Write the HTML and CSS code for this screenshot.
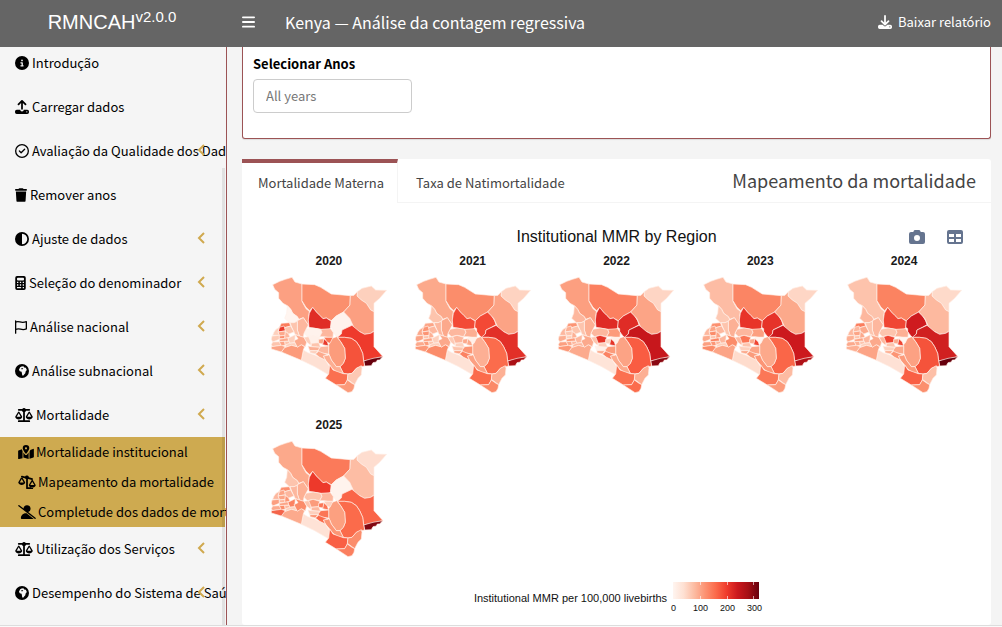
FILE: index.html
```html
<!DOCTYPE html>
<html lang="pt">
<head>
<meta charset="utf-8">
<meta name="viewport" content="width=device-width, initial-scale=1">
<title>RMNCAH – Mapeamento da mortalidade</title>
<link rel="stylesheet" href="styles.css">
</head>
<body>
<svg class="defs" aria-hidden="true">
  <symbol id="i-info" viewBox="0 0 512 512"><path d="M256 512A256 256 0 1 0 256 0a256 256 0 1 0 0 512zM216 336h24V272H216c-13.300 0-24-10.700-24-24s10.700-24 24-24h48c13.300 0 24 10.700 24 24v88h8c13.300 0 24 10.700 24 24s-10.700 24-24 24H216c-13.300 0-24-10.700-24-24s10.700-24 24-24zm40-208a32 32 0 1 1 0 64 32 32 0 1 1 0-64z"/></symbol>
  <symbol id="i-upload" viewBox="0 0 512 512"><path d="M288 109v211a32 32 0 0 1-64 0V109l-73 74a32 32 0 0 1-46-46L233 9a32 32 0 0 1 46 0l128 128a32 32 0 0 1-46 46zM64 352h128a64 64 0 0 0 128 0h128a64 64 0 0 1 64 64v32a64 64 0 0 1-64 64H64a64 64 0 0 1-64-64v-32a64 64 0 0 1 64-64zm368 104a24 24 0 1 0 0-48 24 24 0 0 0 0 48z"/></symbol>
  <symbol id="i-download" viewBox="0 0 512 512"><path d="M288 32a32 32 0 0 0-64 0v243l-73-74a32 32 0 0 0-46 46l128 128a32 32 0 0 0 46 0l128-128a32 32 0 0 0-46-46l-73 74zM64 352a64 64 0 0 0-64 64v32a64 64 0 0 0 64 64h384a64 64 0 0 0 64-64v-32a64 64 0 0 0-64-64H347l-46 45a64 64 0 0 1-90 0l-46-45zm368 56a24 24 0 1 1 0 48 24 24 0 0 1 0-48z"/></symbol>
  <symbol id="i-check" viewBox="0 0 512 512"><g fill="none" stroke="currentColor" stroke-width="48"><circle cx="256" cy="256" r="232"/><path d="M160 256l64 64 128-128" stroke-linecap="round" stroke-linejoin="round"/></g></symbol>
  <symbol id="i-trash" viewBox="0 0 448 512"><path d="M135 18L128 32H32a32 32 0 0 0 0 64h384a32 32 0 0 0 0-64h-96l-7-14A32 32 0 0 0 284 0H164a32 32 0 0 0-29 18zM416 128H32l21 339a48 48 0 0 0 48 45h246a48 48 0 0 0 48-45z"/></symbol>
  <symbol id="i-half" viewBox="0 0 512 512"><path d="M448 256A192 192 0 0 0 256 64v384a192 192 0 0 0 192-192zM0 256a256 256 0 1 1 512 0 256 256 0 1 1-512 0z"/></symbol>
  <symbol id="i-calc" viewBox="0 0 384 512"><path fill-rule="evenodd" d="M64 0h256a64 64 0 0 1 64 64v384a64 64 0 0 1-64 64H64a64 64 0 0 1-64-64V64A64 64 0 0 1 64 0zm32 64a32 32 0 0 0-32 32v32a32 32 0 0 0 32 32h192a32 32 0 0 0 32-32V96a32 32 0 0 0-32-32zM64 208h48v48H64zm104 0h48v48h-48zm104 0h48v48h-48zM64 304h48v48H64zm104 0h48v48h-48zm104 0h48v48h-48zM64 400h152v48H64zm208 0h48v48h-48z"/></symbol>
  <symbol id="i-flag" viewBox="0 0 448 512"><path d="M24 24v464M24 72c140-60 180 60 400-16v272c-200 80-240-60-400 20" fill="none" stroke="currentColor" stroke-width="48" stroke-linecap="round" stroke-linejoin="round"/></symbol>
  <symbol id="i-globe" viewBox="0 0 512 512"><path fill-rule="evenodd" d="M256 0a256 256 0 1 0 0 512 256 256 0 0 0 0-512zM190 118l50-30 70-6 24 44 62 14 36 80-44 52-12 66-42 46-24 40-44-6-14-84-10-54-66-12-32-60z M262 150l-36 12 6 26 48 4 22-22z"/></symbol>
  <symbol id="i-scale" viewBox="0 0 640 512"><path fill-rule="evenodd" d="M384 32h128a32 32 0 0 1 0 64H398a80 80 0 0 1-46 52v300h160a32 32 0 0 1 0 64H128a32 32 0 0 1 0-64h160V148a80 80 0 0 1-46-52H128a32 32 0 0 1 0-64h128a80 80 0 0 1 128 0zm56 288h144l-72-124zm72 96c-63 0-115-34-126-79 0-11 1-22 6-32l95-162a30 30 0 0 1 50 0l95 162c5 10 9 21 6 32-11 45-63 79-126 79zM127 196L54 320h145zM1 337c-3-11 1-22 6-32l95-162a30 30 0 0 1 50 0l95 162c5 10 8 21 6 32-11 45-63 79-126 79S12 382 1 337z"/></symbol>
  <symbol id="i-tilt" viewBox="0 0 640 512"><path fill-rule="evenodd" d="M240 118L124 88a32 32 0 0 1 16-62l108 28a80 80 0 0 1 144 30l126 36a32 32 0 0 1-16 62l-134-38-16 8v296h160a32 32 0 0 1 0 64H320a32 32 0 0 1-32-32V148a80 80 0 0 1-48-30zM440 368h144l-72-124zm72 96c-63 0-115-34-126-79 0-11 1-22 6-32l95-162a30 30 0 0 1 50 0l95 162c5 10 9 21 6 32-11 45-63 79-126 79zM127 146L54 270h145zM1 287c-3-11 1-22 6-32l95-162a30 30 0 0 1 50 0l95 162c5 10 8 21 6 32-11 45-63 79-126 79S12 332 1 287z"/></symbol>
  <symbol id="i-map" viewBox="0 0 576 512"><path fill-rule="evenodd" d="M408 120c0 55-73 151-105 191a19 19 0 0 1-30 0C241 271 168 175 168 120a120 120 0 0 1 240 0zM288 80a40 40 0 1 0 0 80 40 40 0 0 0 0-80zM138 154c5 22 14 44 24 64v263L35 510A24 24 0 0 1 0 488V223c0-10 6-19 15-22zM192 270c18 26 38 52 56 74a51 51 0 0 0 80 0c18-22 38-48 56-74v242l-192-55zM416 503V250c28-42 22-50 28-66l97-39a24 24 0 0 1 35 22v265c0 10-6 19-15 22z"/></symbol>
  <symbol id="i-userslash" viewBox="0 0 640 512"><path d="M39 5a24 24 0 0 0-30 38l592 464a24 24 0 0 0 30-38L362 258A128 128 0 1 0 194 126zM96 482c0-98 80-178 178-178h28l265 208H126a30 30 0 0 1-30-30z"/></symbol>
  <symbol id="i-camera" viewBox="0 0 512 512"><path fill-rule="evenodd" d="M149 65l-10 31H64a64 64 0 0 0-64 64v256a64 64 0 0 0 64 64h384a64 64 0 0 0 64-64V160a64 64 0 0 0-64-64h-75l-10-31a48 48 0 0 0-46-33H195a48 48 0 0 0-46 33zm107 127a96 96 0 1 1 0 192 96 96 0 0 1 0-192z"/></symbol>
  <symbol id="i-table" viewBox="0 0 512 512"><path fill-rule="evenodd" d="M64 32h384a64 64 0 0 1 64 64v320a64 64 0 0 1-64 64H64a64 64 0 0 1-64-64V96a64 64 0 0 1 64-64zM64 160v96h160v-96zm224 0v96h160v-96zM64 320v96h160v-96zm224 0v96h160v-96z"/></symbol>
  <symbol id="i-chev" viewBox="0 0 8 12"><path d="M7 1L2 6l5 5" fill="none" stroke="currentColor" stroke-width="2"/></symbol>
  <symbol id="i-bars" viewBox="0 0 14 12"><path d="M1 1h12M1 6h12M1 11h12" fill="none" stroke="currentColor" stroke-width="2" stroke-linecap="round"/></symbol>
</svg>

<header class="topbar">
  <a class="brand" href="#">RMNCAH<sup>v2.0.0</sup></a>
  <button class="toggle" type="button" aria-label="Menu"><svg width="13" height="12"><use href="#i-bars"/></svg></button>
  <h1 class="heading">Kenya — Análise da contagem regressiva</h1>
  <button class="report" type="button"><svg width="14" height="14"><use href="#i-download"/></svg>Baixar relatório</button>
</header>

<div class="shell">
  <aside class="sidebar">
    <nav class="menu">
      <a class="item" href="#"><svg width="14" height="14"><use href="#i-info"/></svg>Introdução</a>
      <a class="item" href="#"><svg width="14" height="14"><use href="#i-upload"/></svg>Carregar dados</a>
      <a class="item" href="#"><svg width="14" height="14"><use href="#i-check"/></svg>Avaliação da Qualidade dos Dados<svg class="chev"><use href="#i-chev"/></svg></a>
      <a class="item" href="#"><svg width="12" height="14"><use href="#i-trash"/></svg>Remover anos</a>
      <a class="item" href="#"><svg width="14" height="14"><use href="#i-half"/></svg>Ajuste de dados<svg class="chev"><use href="#i-chev"/></svg></a>
      <a class="item" href="#"><svg width="11" height="14"><use href="#i-calc"/></svg>Seleção do denominador<svg class="chev"><use href="#i-chev"/></svg></a>
      <a class="item" href="#"><svg width="12" height="14"><use href="#i-flag"/></svg>Análise nacional<svg class="chev"><use href="#i-chev"/></svg></a>
      <a class="item" href="#"><svg width="14" height="14"><use href="#i-globe"/></svg>Análise subnacional<svg class="chev"><use href="#i-chev"/></svg></a>
      <a class="item" href="#"><svg width="18" height="14"><use href="#i-scale"/></svg>Mortalidade<svg class="chev"><use href="#i-chev"/></svg></a>
      <div class="submenu">
        <a class="subitem" href="#"><svg width="16" height="14"><use href="#i-map"/></svg>Mortalidade institucional</a>
        <a class="subitem" href="#"><svg width="18" height="14"><use href="#i-tilt"/></svg>Mapeamento da mortalidade</a>
        <a class="subitem" href="#"><svg width="18" height="14"><use href="#i-userslash"/></svg>Completude dos dados de mortalidade</a>
      </div>
      <a class="item" href="#"><svg width="18" height="14"><use href="#i-scale"/></svg>Utilização dos Serviços<svg class="chev"><use href="#i-chev"/></svg></a>
      <a class="item" href="#"><svg width="14" height="14"><use href="#i-globe"/></svg>Desempenho do Sistema de Saúde<svg class="chev"><use href="#i-chev"/></svg></a>
    </nav>
    <div class="scrollbar"></div>
  </aside>

  <main class="content">
    <section class="filter">
      <label for="years">Selecionar Anos</label>
      <input id="years" type="text" placeholder="All years">
    </section>

    <section class="panel">
      <div class="tabs">
        <button class="tab active" type="button">Mortalidade Materna</button>
        <button class="tab" type="button">Taxa de Natimortalidade</button>
        <h2 class="panel-title">Mapeamento da mortalidade</h2>
      </div>
      <div class="chart">
        <div class="chart-head">
          <h3>Institutional MMR by Region</h3>
          <div class="tools">
            <button type="button" aria-label="Imagem"><svg width="16" height="16"><use href="#i-camera"/></svg></button>
            <button type="button" aria-label="Tabela"><svg width="16" height="16"><use href="#i-table"/></svg></button>
          </div>
        </div>
        <div class="maps" id="maps"></div>
        <div class="legend">
          <span class="legend-name">Institutional MMR per 100,000 livebirths</span>
          <div class="legend-scale">
            <svg class="ramp" viewBox="0 0 86 17"><path d="M27.500 0v3M54.500 0v3M80.500 0v3M27.500 14v3M54.500 14v3M80.500 14v3" stroke="#fff" stroke-opacity=".6"/></svg>
            <div class="ticks"><span>0</span><span>100</span><span>200</span><span>300</span></div>
          </div>
        </div>
      </div>
    </section>
  </main>
</div>
<footer class="foot"></footer>
<script src="maps.js"></script>
</body>
</html>
```
FILE: styles.css
```css
* { box-sizing: border-box; }
body {
  margin: 0;
  height: 100vh;
  display: flex;
  flex-direction: column;
  overflow: hidden;
  background: #f4f4f4;
  color: #333;
  font-family: "Noto Sans CJK SC", "Noto Sans", sans-serif;
  font-size: 13px;
  line-height: 20px;
}
svg { fill: currentColor; flex: none; }
button { border: 0; padding: 0; background: none; color: inherit; font: inherit; cursor: pointer; }
a { color: inherit; text-decoration: none; }
h1, h2, h3 { margin: 0; font-weight: 400; }
.defs { position: absolute; width: 0; height: 0; }

.topbar {
  flex: none;
  display: flex;
  align-items: center;
  height: 47px;
  padding: 0 11px 4px 0;
  background: #656565;
  color: #fff;
}
.brand {
  width: 227px;
  padding-right: 3px;
  text-align: center;
  font-family: "Liberation Sans", Arial, sans-serif;
  font-size: 20px;
}
.brand sup { font-size: 15px; line-height: 0; vertical-align: 7px; }
.toggle { display: flex; margin-left: 15px; }
.heading { margin-left: 30px; font-size: 16px; }
.report { display: flex; align-items: center; gap: 6px; margin-left: auto; }

.shell { flex: 1; min-height: 0; display: flex; }
.sidebar {
  position: relative;
  flex: none;
  width: 227px;
  overflow: hidden;
  border-right: 1px solid #9c5355;
  background: #f5f5f5;
  color: #000;
  white-space: nowrap;
}
.menu { margin-top: -6px; }
.item {
  position: relative;
  display: flex;
  align-items: center;
  gap: 3px;
  height: 44px;
  padding-left: 15px;
}
.chev {
  position: absolute;
  right: 21px;
  top: 15px;
  width: 8px;
  height: 12px;
  color: #d0a94f;
}
.submenu { margin-right: 1px; background: #ceaa50; }
.subitem { display: flex; align-items: center; gap: 2px; height: 30px; padding-left: 18px; }
.scrollbar {
  position: absolute;
  top: 121px;
  right: 1px;
  bottom: 0;
  width: 3px;
  background: rgba(0, 0, 0, .08);
}

.content { flex: 1; min-width: 0; padding: 0 11px 0 15px; display: flex; flex-direction: column; gap: 20px; }
.filter {
  display: flex;
  flex-direction: column;
  align-items: flex-start;
  gap: 5px;
  padding: 7px 10px 25px;
  border: 1px solid #9c5355;
  border-top: 0;
  border-radius: 0 0 3px 3px;
  background: #fff;
  box-shadow: 0 1px 1px rgba(0, 0, 0, .1);
}
.filter label { color: #000; font-weight: 700; }
.filter input {
  width: 159px;
  height: 34px;
  padding: 0 12px 2px;
  border: 1px solid #ccc;
  border-radius: 4px;
  background: #fff;
  font: inherit;
}
.filter input::placeholder { color: #777; }

.panel { flex: 1; min-height: 0; border-radius: 3px; background: #fff; }
.tabs { display: flex; height: 44px; border-bottom: 1px solid #f4f4f4; }
.tab { border-top: 4px solid transparent; padding: 0 15px 0 18px; color: #444; }
.tab.active {
  height: 44px;
  padding: 0 13px 0 16px;
  border-top-color: #9c5355;
  border-right: 1px solid #f4f4f4;
  background: #fff;
}
.panel-title { margin: 0 15px 0 auto; font-size: 18px; line-height: 42px; color: #444; }

.chart { padding: 22px 15px 0; font-family: "Liberation Sans", Arial, sans-serif; color: #111; }
.chart-head { position: relative; text-align: center; }
.chart-head h3 { font-size: 16px; line-height: 24px; }
.tools { position: absolute; top: 4px; right: 13px; display: flex; gap: 22px; color: #65748f; }
.tools button { display: flex; }
.maps { display: grid; grid-template-columns: repeat(5, 1fr); row-gap: 19px; }
.map { display: flex; flex-direction: column; align-items: center; margin: 0; color: #1a1a1a; }
.map figcaption { font-size: 12px; font-weight: 700; line-height: 24px; }
.map svg { width: 118px; height: 118px; margin-top: 3px; overflow: visible; }
.map .county { stroke: #fff0e9; stroke-width: 2; stroke-linejoin: round; }

.legend { display: flex; justify-content: center; gap: 6px; padding-top: 24px; }
.legend-name { font-size: 11px; line-height: 32px; }
.legend-scale { width: 86px; }
.ramp {
  display: block;
  width: 86px;
  height: 17px;
  background: linear-gradient(90deg, #fff5f0, #fee0d2, #fcbba1, #fc9272, #fb6a4a, #ef3b2c, #cb181d, #a50f15, #67000d);
}
.ticks { display: grid; grid-template-columns: 27px 27px 27px 27px; margin: 3px -22px 0 -13px; font-size: 9px; line-height: 12px; text-align: center; }

.foot { flex: none; height: 2px; border-top: 1px solid #ddd; background: #fafafa; }
```
FILE: maps.js
```js
// County outlines; the unit is a third of a pixel on screen.
const counties = {
  turkana: "24,104 45,94 62,88 82,82 91,96 112,102 112,154 124,176 134,184 131,210 131,225 116,203 102,208 98,200 84,190 78,178 68,167 55,160 42,145 42,128 30,118",
  marsabit: "112,102 150,104 168,112 200,132 257,137 256,165 237,186 215,198 200,212 185,204 175,206 165,196 155,186 144,172 135,182 124,172 112,152",
  samburu: "144,172 155,186 165,196 175,206 185,204 200,214 198,232 195,238 178,240 168,238 133,232 131,210 134,190",
  isiolo: "237,186 248,196 258,212 262,224 248,232 232,240 230,252 220,264 214,258 204,245 204,236 198,232 200,212 215,198",
  mandera: "292,115 320,108 333,120 366,121 345,145 328,160 328,185 318,180 305,160 290,150 277,138 278,125",
  wajir: "278,125 277,138 290,150 305,160 318,180 328,185 328,243 318,250 300,253 285,245 270,238 263,222 255,205 237,186 256,165 257,137 268,136",
  garissa: "262,226 285,245 300,253 318,250 328,244 328,290 355,320 330,326 297,333 294,310 285,290 275,275 260,265 240,262 218,262 230,252 232,240",
  lamu: "297,333 325,325 354,320 345,330 338,330 335,336 325,338 320,347 300,348",
  tana: "218,262 240,262 260,265 275,275 285,290 294,310 297,333 300,348 290,350 275,355 262,370 250,372 236,370 226,350 236,340 242,325 240,295 228,275",
  kitui: "200,266 216,260 228,275 240,295 242,325 236,340 226,350 215,350 200,330 192,310 192,285",
  makueni: "190,315 194,315 200,330 215,350 226,350 236,370 220,368 205,358 195,345 182,330 176,318",
  kajiado: "116,300 130,308 150,315 165,322 182,330 195,350 193,375 150,350 110,331",
  narok: "60,292 80,285 98,290 110,284 120,290 116,300 110,331 50,306",
  taita: "195,345 205,360 236,371 250,372 248,390 240,404 215,405 182,385 192,372",
  kilifi: "290,347 275,355 262,370 250,372 248,388 270,404 280,385 290,375 292,355",
  kwale: "248,390 262,400 270,404 268,415 262,425 250,428 215,405 240,404",
  laikipia: "124,238 145,234 168,238 172,247 165,260 145,256 128,260 118,250",
  meru: "168,238 198,236 206,248 205,262 190,262 178,260 165,260 172,247",
  pokot: "68,167 78,178 84,190 98,200 102,208 98,214 88,218 74,218 60,205 66,190",
  baringo: "98,212 116,203 131,225 124,238 118,250 116,262 104,258 98,240",
  elgeyo: "76,218 88,218 98,214 98,240 104,258 92,254 84,238",
  nzoia: "50,220 74,218 78,228 60,233 44,232",
  bungoma: "44,232 58,228 64,242 40,246",
  uasin: "60,233 78,228 88,246 72,252 62,244",
  kakamega: "40,246 62,243 62,256 44,258",
  busia: "34,238 44,232 40,246 44,256 24,256 28,246",
  siaya: "22,258 44,256 44,268 24,276 20,268",
  vihiga: "44,258 62,256 60,266 44,266",
  nandi: "62,244 72,252 76,262 60,266",
  kisumu: "44,268 70,263 72,273 44,276",
  kericho: "76,262 92,254 90,278 74,280 70,264",
  homabay: "24,276 44,275 50,286 24,290 20,284",
  kisii: "44,275 60,274 62,286 50,288",
  nyamira: "60,274 74,274 76,284 62,286",
  migori: "20,290 50,286 62,290 50,306 20,297",
  bomet: "74,280 90,278 98,290 80,286 62,292 64,284",
  nakuru: "92,254 104,258 118,262 126,276 122,290 110,284 98,292 88,272 100,266",
  nyandarua: "118,262 132,260 140,272 138,286 126,276",
  nyeri: "132,260 145,256 165,262 162,278 140,280",
  kirinyaga: "162,268 178,266 176,282 162,280",
  tharaka: "178,262 205,262 196,280 186,276",
  embu: "178,266 188,276 192,288 174,284",
  muranga: "140,280 162,278 168,292 140,290",
  kiambu: "130,288 140,290 166,292 160,302 135,302",
  nairobi: "136,302 160,302 152,312 136,308",
  machakos: "168,290 192,288 192,312 160,308 162,298",
  athi: "152,312 162,304 190,315 176,318 182,330 165,322"
};

const order = Object.keys(counties);

const shades = {
  2020: "#fca082 #fb8f6d #e02d26 #fff2ec #fdd0bd #fc9f81 #ee3a2c #67000d #f5533b #fc9c7c #fdae92 #fee0d3 #fc9b7b #fb7050 #fdc9b4 #fb9a7a #fff2ec #fdb79e #fff5f0 #fdb79e #fdc4ad #fb7c5c #ea3b2d #fdc4ad #fca98c #fdd0bd #fdcbb6 #fc8f6f #fdb79e #fca98c #fdd0bd #fdc4ad #fca486 #fdc4ad #fca486 #fdd0bd #fca98c #fdd0bd #fff0e9 #fca486 #fb7656 #e83a2d #fdc4ad #fcb095 #fdd0bd #fdb79e #fca98c",
  2021: "#fca98b #fb8d6b #f34a36 #f34935 #fed3c1 #fca385 #e23028 #ab1016 #fb6c4c #fdaf94 #fca082 #fee2d6 #fb8c6a #fb6b4b #fdb094 #fb8968 #fdb79e #fcae92 #fdc4ad #fca98c #fdb79e #fca486 #fc9575 #fdb79e #fc9474 #fca98c #fca486 #fdc4ad #fdb094 #fca486 #fdd0bd #fca98c #fc9c7c #fdc4ad #fc9878 #fdd0bd #fca98c #fdc9b4 #fdb79e #fca98c #fff0e9 #fca98c #fdd0bd #fdc4ad #fca486 #fc9575 #fb8262",
  2022: "#fc9f80 #fc8060 #df2b26 #df2c26 #fed5c4 #fca486 #c7171c #8a0812 #f95c42 #fca385 #fca98c #fee4d8 #fcaa8d #fb7050 #fdaf93 #fb6c4c #fdb79e #fc9b7b #fdb79e #fdb094 #fdc4ad #fc9575 #fdb094 #fdc4ad #fdc4ad #fdb79e #fcae92 #fdd0bd #fdb094 #fc9c7c #fdb79e #fc9f80 #fca98c #fdb79e #fc9878 #fdb79e #fca98c #fdc4ad #e5362a #fdd0bd #fff0e9 #e5362a #fdd0bd #fff0e9 #fca98c #fb9b7b #fb8262",
  2023: "#fdbca4 #fb8564 #e83429 #e63329 #fed6c5 #fca98b #cc191d #b01117 #fa6648 #fca98b #fc9575 #fedccd #fca486 #fb7757 #fdbba2 #fc9a7a #fdb79e #fc9f80 #fdc9b4 #fcb095 #fdc4ad #fc8f6f #fca486 #fdb79e #fb8c6a #fdb79e #fca98c #fdc4ad #fca486 #fb8262 #fdb79e #fc9f80 #fc9575 #fdb79e #fb8c6a #fdd0bd #fb8c6a #fdb79e #fb7656 #fca98c #fff5f0 #ef4533 #fdc4ad #fdd0bd #fca98c #fca486 #fb9b7b",
  2024: "#fdc3ac #fb8361 #f04634 #cf1b1f #fedaca #fdb99f #d02020 #67000d #f5533b #fca183 #fc9a7a #fee1d5 #fca486 #f95f44 #fdbfa7 #fb8f6e #fdc4ad #fdb094 #fdb79e #fdb79e #fdc4ad #fb7c5c #fdb79e #fca98c #fca486 #fdb79e #fdb094 #fdc4ad #fca98c #fca486 #fdb79e #fca98c #fdb094 #fdc4ad #fdb094 #fdd0bd #fca98c #fdb79e #ef4533 #fca98c #fff5f0 #ef4533 #fdc4ad #fdd0bd #fdb094 #fca98c #fc9575",
  2025: "#fca98b #fb7a5a #ed392b #fff3ed #feddcf #fdbda4 #fa6548 #820711 #fb6b4b #fca080 #fc9575 #fee2d6 #fcaa8d #f95f44 #fb8d6c #fb7f5f #fdc4ad #fdb79e #fdc4ad #fdb094 #fdb79e #fc8f6f #fca486 #fdb79e #fca486 #fdb79e #fc9f80 #fdb79e #fc9575 #fca486 #fb8262 #fca98c #fb8c6a #fdb79e #f4644a #fdd0bd #fb8c6a #fdc4ad #fb9b7b #fb7656 #fdd0bd #fb7656 #fdb79e #fdd0bd #fc9575 #fb7656 #fa6b4c"
};

document.getElementById("maps").innerHTML = Object.entries(shades).map(([year, list]) => {
  const fills = list.split(" ");
  const shapes = order.map((name, i) =>
    `<polygon class="county" points="${counties[name]}" fill="${fills[i]}"/>`).join("");
  return `<figure class="map"><figcaption>${year}</figcaption>
    <svg viewBox="16 78 354 354" role="img" aria-label="Kenya ${year}">${shapes}</svg></figure>`;
}).join("");
```
